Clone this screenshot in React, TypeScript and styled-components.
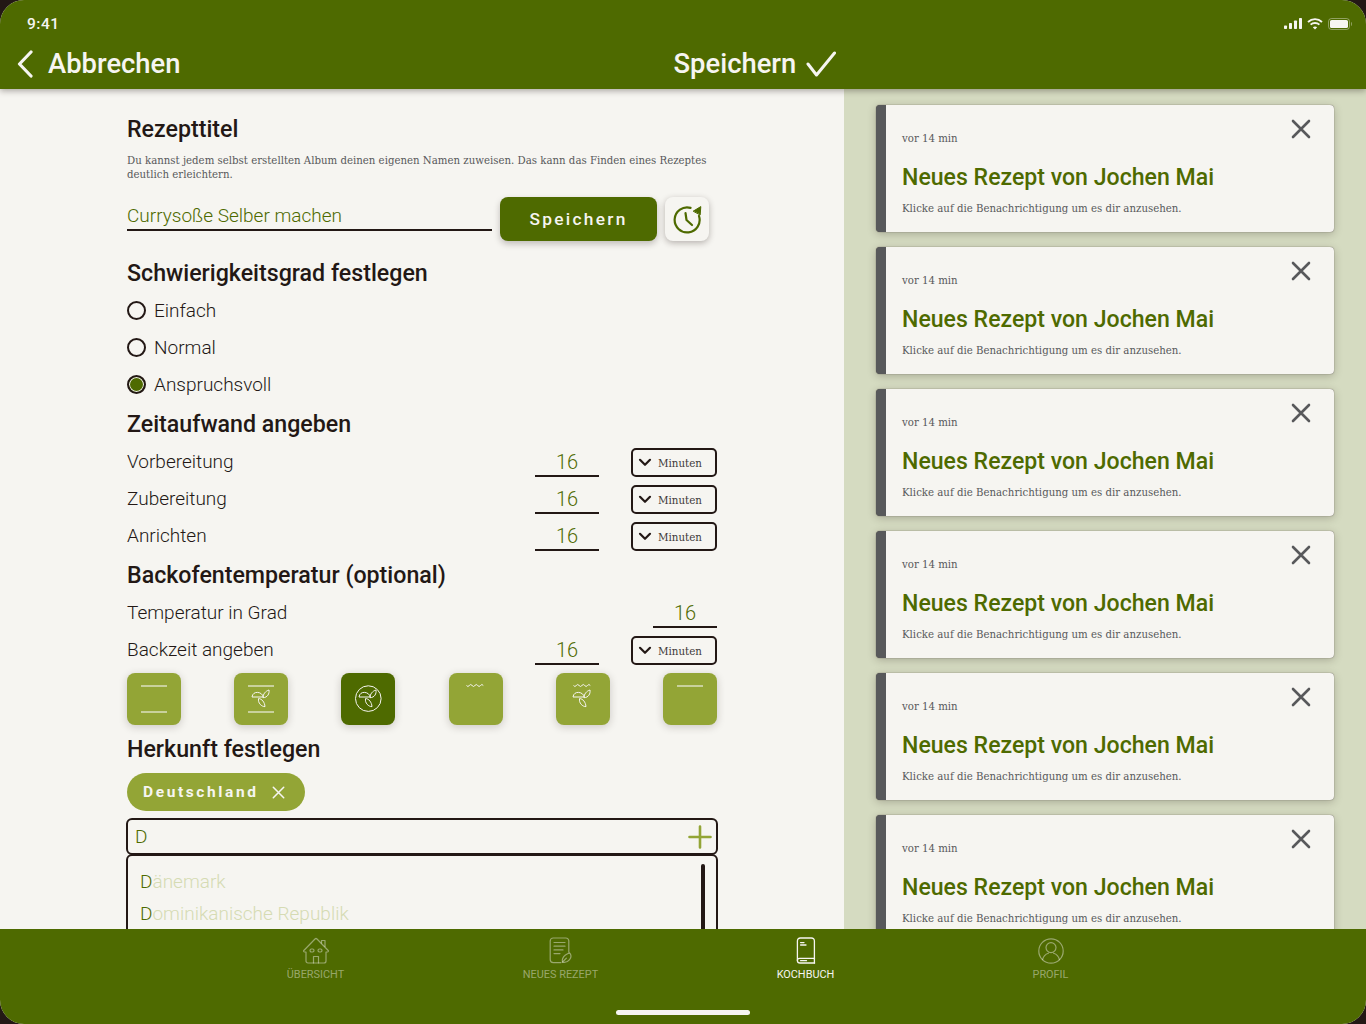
import React from "react";
import styled, { createGlobalStyle } from "styled-components";

const GREEN = "#4e6a00";
const OLIVE = "#93a536";
const PAPER = "#f6f5f1";
const DARK = "#231815";
const SLAB = `"DejaVu Serif", "Liberation Serif", serif`;

const GlobalStyle = createGlobalStyle`
    html, body {
        margin: 0;
        padding: 0;
        background: ${DARK};
    }
    * {
        box-sizing: border-box;
    }
`;

const Icon = {
    Back: () => (
        <svg width="16" height="28" viewBox="0 0 16 28" fill="none" stroke="#f6f5f1" strokeWidth="3.2" strokeLinecap="round" strokeLinejoin="round">
            <path d="M14 2 L2.5 14 L14 26" />
        </svg>
    ),
    Check: () => (
        <svg width="30" height="26" viewBox="0 0 30 26" fill="none" stroke="#f6f5f1" strokeWidth="3" strokeLinecap="round" strokeLinejoin="round">
            <path d="M2 13 L10.5 24 L28.5 2" />
        </svg>
    ),
    Signal: () => (
        <svg width="18" height="11" viewBox="0 0 18 11" fill="#f6f5f1">
            <rect x="0" y="7.5" width="3" height="3.5" rx="0.7" />
            <rect x="5" y="5" width="3" height="6" rx="0.7" />
            <rect x="10" y="2.5" width="3" height="8.5" rx="0.7" />
            <rect x="15" y="0" width="3" height="11" rx="0.7" />
        </svg>
    ),
    Wifi: () => (
        <svg width="16" height="12" viewBox="0 0 16 12" fill="none" stroke="#f6f5f1" strokeWidth="1.9">
            <path d="M1 4 C5 0.2 11 0.2 15 4" />
            <path d="M3.6 6.6 C6 4.4 10 4.4 12.4 6.6" />
            <path d="M8 11.6 L5.8 9.2 C7 8.2 9 8.2 10.2 9.2 Z" fill="#f6f5f1" stroke="none" />
        </svg>
    ),
    Battery: () => (
        <svg width="24" height="12" viewBox="0 0 24 12" fill="none">
            <rect x="0.5" y="0.5" width="21" height="11" rx="3" stroke="#f6f5f1" strokeOpacity="0.4" />
            <rect x="2" y="2" width="18" height="8" rx="1.6" fill="#f6f5f1" />
            <path d="M23 4 C23.8 4.3 24 5.2 24 6 C24 6.8 23.8 7.7 23 8 Z" fill="#f6f5f1" fillOpacity="0.4" />
        </svg>
    ),
    History: () => (
        <svg width="30" height="30" viewBox="0 0 30 30" fill="none" stroke={GREEN} strokeWidth="2.2" strokeLinecap="round" strokeLinejoin="round">
            <path d="M18.5 3.9 A12.5 12.5 0 1 0 27 12" />
            <path d="M13.5 9 L14.5 16 L20 21" />
            <path d="M21.5 7 L28.8 2.6 L28.2 10.6 Z" fill={GREEN} strokeWidth="1" />
        </svg>
    ),
    Close: ({ size = 20, color = "#58595b", width = 2.6 }: { size?: number; color?: string; width?: number }) => (
        <svg width={size} height={size} viewBox="0 0 20 20" fill="none" stroke={color} strokeWidth={width} strokeLinecap="round">
            <path d="M2 2 L18 18 M18 2 L2 18" />
        </svg>
    ),
    Chevron: () => (
        <svg width="14" height="9" viewBox="0 0 14 9" fill="none" stroke={DARK} strokeWidth="2.2" strokeLinecap="round" strokeLinejoin="round">
            <path d="M2 1.8 L7 6.8 L12 1.8" />
        </svg>
    ),
    Plus: () => (
        <svg width="24" height="24" viewBox="0 0 24 24" fill="none" stroke={OLIVE} strokeWidth="2.6" strokeLinecap="round">
            <path d="M12 1.5 V22.5 M1.5 12 H22.5" />
        </svg>
    ),
    Home: () => (
        <svg width="28" height="27" viewBox="0 0 28 27" fill="none" stroke="currentColor" strokeWidth="1.2" strokeLinecap="round" strokeLinejoin="round">
            <path d="M1.8 13.5 L13 2 C13.6 1.4 14.4 1.4 15 2 L26.2 13.5 C26.8 14.2 26.2 15 25.4 15 L24 15 L24 24 C24 25.2 23.2 26 22 26 L6 26 C4.8 26 4 25.2 4 24 L4 15 L2.6 15 C1.8 15 1.2 14.2 1.8 13.5 Z" />
            <path d="M19.5 6 L19.5 3.5 L23 3.5 L23 9.5" />
            <rect x="8" y="12" width="4" height="3" rx="1.4" />
            <rect x="16" y="12" width="4" height="3" rx="1.4" />
            <path d="M11.5 26 L11.5 19.5 L16.5 19.5 L16.5 26" />
        </svg>
    ),
    Recipe: () => (
        <svg width="24" height="27" viewBox="0 0 24 27" fill="none" stroke="currentColor" strokeWidth="1.2" strokeLinecap="round" strokeLinejoin="round">
            <path d="M19.8 15 L19.8 4 C19.8 2.2 18.6 1 16.8 1 L4.2 1 C2.4 1 1.2 2.2 1.2 4 L1.2 22.6 C1.2 24.4 2.4 25.6 4.2 25.6 L12 25.6" />
            <path d="M5 5.5 H16 M5 9.2 H16 M5 12.9 H14 M5 16.6 H11" />
            <path d="M13.5 25.2 C12.8 22.6 14 20 16.4 18 L20.4 15.8 C22.4 17.6 22.6 20.4 20.6 22.6 C18.8 24.8 16 25.8 13.5 25.2 Z" />
            <path d="M13.6 25 L17.4 21.2" />
        </svg>
    ),
    Book: () => (
        <svg width="20" height="27" viewBox="0 0 20 27" fill="none" stroke="currentColor" strokeWidth="1.3" strokeLinecap="round" strokeLinejoin="round">
            <path d="M18.4 22 L18.4 4 C18.4 2.2 17.2 1 15.4 1 L4.4 1 C2.6 1 1.4 2.2 1.4 4 L1.4 23.4 C1.4 25 2.4 26 4 26 L18.6 26" />
            <path d="M1.4 23.4 C1.4 22.4 2.4 21.4 3.6 21.4 L18.4 21.4" />
            <path d="M18.4 21.4 L18.4 26" />
            <path d="M4.6 5.6 H8 M4.6 8 H10 M4.6 23.7 H10.5" />
        </svg>
    ),
    Profile: () => (
        <svg width="26" height="26" viewBox="0 0 26 26" fill="none" stroke="currentColor" strokeWidth="1.2" strokeLinecap="round" strokeLinejoin="round">
            <circle cx="13" cy="13" r="12.2" />
            <circle cx="13" cy="9.6" r="5" />
            <path d="M4.6 21.6 C5.4 18 8.4 15.8 10.4 15.2 M21.4 21.6 C20.6 18 17.6 15.8 15.6 15.2" />
        </svg>
    ),
};

type OvenMode = "top-bottom" | "fan-top-bottom" | "fan-ring" | "grill" | "grill-fan" | "top";

const Fan = ({ x = 0 }: { x?: number }) => (
    <g transform={`translate(${x} 0)`} fill="none" stroke="#f6f5f1" strokeWidth="1" strokeLinejoin="round">
        <path d="M18 24 C18.4 20.6 21 19.2 23.6 19.4 C26.4 19.6 28.8 21.4 29.3 24 Z" />
        <path d="M29 24.7 C29 21 31.6 18 35 17 C35.6 20.6 33.6 24.6 29 24.7 Z" />
        <path d="M24.6 25.5 C27.8 25.8 30.6 29 31 33.6 C27.6 33.8 23.6 30 24.6 25.5 Z" />
    </g>
);

const Wave = () => (
    <path d="M17.5 12.5 q1.4 2 2.8 0 t2.8 0 t2.8 0 t2.8 0 t2.8 0 t2.8 0" fill="none" stroke="#f6f5f1" strokeWidth="1" />
);

const OvenIcon = ({ mode }: { mode: OvenMode }) => {
    const faint = "rgba(246,245,241,0.55)";
    return (
        <svg width="54" height="52" viewBox="0 0 54 52">
            {(mode === "top-bottom" || mode === "fan-top-bottom" || mode === "top") && (
                <rect x="14" y="12" width="26" height="2" fill={faint} />
            )}
            {(mode === "top-bottom" || mode === "fan-top-bottom") && (
                <rect x="14" y="38" width="26" height="2" fill={faint} />
            )}
            {(mode === "grill" || mode === "grill-fan") && <Wave />}
            {mode === "fan-top-bottom" && <Fan />}
            {mode === "fan-ring" && (
                <>
                    <circle cx="27.3" cy="25.6" r="12.8" fill="none" stroke="#f6f5f1" strokeWidth="1" />
                    <Fan />
                </>
            )}
            {mode === "grill-fan" && <Fan x={-1} />}
        </svg>
    );
};

const ovenModes: OvenMode[] = ["top-bottom", "fan-top-bottom", "fan-ring", "grill", "grill-fan", "top"];

const AmountRow = ({ label, value = "16" }: { label: string; value?: string }) => (
    <Row>
        <RowLabel>{label}</RowLabel>
        <AmountField>{value}</AmountField>
        <UnitSelect>
            <Icon.Chevron />
            <UnitText>Minuten</UnitText>
        </UnitSelect>
    </Row>
);

const Notification = () => (
    <Card>
        <CardTime>vor 14 min</CardTime>
        <CardTitle>Neues Rezept von Jochen Mai</CardTitle>
        <CardText>Klicke auf die Benachrichtigung um es dir anzusehen.</CardText>
        <CardClose>
            <Icon.Close />
        </CardClose>
    </Card>
);

const App: React.FC = () => {
    return (
        <Screen>
            <GlobalStyle />
            <Header>
                <StatusBar>
                    <Clock>9:41</Clock>
                    <StatusIcons>
                        <Icon.Signal />
                        <Icon.Wifi />
                        <Icon.Battery />
                    </StatusIcons>
                </StatusBar>
                <NavBar>
                    <BackLink>
                        <Icon.Back />
                        <NavText>Abbrechen</NavText>
                    </BackLink>
                    <SaveLink>
                        <NavText>Speichern</NavText>
                        <Icon.Check />
                    </SaveLink>
                </NavBar>
            </Header>

            <Main>
                <FormPane>
                    <FirstHeading>Rezepttitel</FirstHeading>
                    <Description>
                        Du kannst jedem selbst erstellten Album deinen eigenen Namen zuweisen. Das kann das Finden eines Rezeptes
                        deutlich erleichtern.
                    </Description>
                    <TitleRow>
                        <TitleInput>Currysoße Selber machen</TitleInput>
                        <SaveButton>Speichern</SaveButton>
                        <HistoryButton>
                            <Icon.History />
                        </HistoryButton>
                    </TitleRow>

                    <Heading>Schwierigkeitsgrad festlegen</Heading>
                    <Row>
                        <Radio />
                        <RadioLabel>Einfach</RadioLabel>
                    </Row>
                    <Row>
                        <Radio />
                        <RadioLabel>Normal</RadioLabel>
                    </Row>
                    <Row>
                        <Radio $checked />
                        <RadioLabel>Anspruchsvoll</RadioLabel>
                    </Row>

                    <Heading>Zeitaufwand angeben</Heading>
                    <AmountRow label="Vorbereitung" />
                    <AmountRow label="Zubereitung" />
                    <AmountRow label="Anrichten" />

                    <Heading>Backofentemperatur (optional)</Heading>
                    <Row>
                        <RowLabel>Temperatur in Grad</RowLabel>
                        <TemperatureField>16</TemperatureField>
                    </Row>
                    <AmountRow label="Backzeit angeben" />

                    <OvenRow>
                        {ovenModes.map((mode) => (
                            <OvenButton key={mode} $active={mode === "fan-ring"}>
                                <OvenIcon mode={mode} />
                            </OvenButton>
                        ))}
                    </OvenRow>

                    <OriginHeading>Herkunft festlegen</OriginHeading>
                    <Chip>
                        Deutschland
                        <Icon.Close size={13} color={PAPER} width={2.4} />
                    </Chip>
                    <SearchBox>
                        <SearchValue>D</SearchValue>
                        <Icon.Plus />
                    </SearchBox>
                    <Suggestions>
                        <Suggestion>
                            <Match>D</Match>änemark
                        </Suggestion>
                        <Suggestion>
                            <Match>D</Match>ominikanische Republik
                        </Suggestion>
                        <ScrollThumb />
                    </Suggestions>
                </FormPane>

                <NotificationPane>
                    {[0, 1, 2, 3, 4, 5].map((i) => (
                        <Notification key={i} />
                    ))}
                </NotificationPane>
            </Main>

            <TabBar>
                <Tab>
                    <TabIcon><Icon.Home /></TabIcon>
                    <TabLabel>ÜBERSICHT</TabLabel>
                </Tab>
                <Tab>
                    <TabIcon><Icon.Recipe /></TabIcon>
                    <TabLabel>NEUES REZEPT</TabLabel>
                </Tab>
                <Tab $active>
                    <TabIcon><Icon.Book /></TabIcon>
                    <TabLabel>KOCHBUCH</TabLabel>
                </Tab>
                <Tab>
                    <TabIcon><Icon.Profile /></TabIcon>
                    <TabLabel>PROFIL</TabLabel>
                </Tab>
                <HomeIndicator />
            </TabBar>
        </Screen>
    );
};

export default App;

const Screen = styled.div`
    position: relative;
    display: flex;
    flex-direction: column;
    width: 1366px;
    height: 1024px;
    overflow: hidden;
    border-radius: 24px;
    background: ${PAPER};
    font-family: Roboto, sans-serif;
    color: ${DARK};
`;

const Header = styled.header`
    position: relative;
    z-index: 2;
    flex: none;
    height: 89px;
    padding: 0 17px;
    background: ${GREEN};
    color: ${PAPER};
    box-shadow: 0 2px 6px rgba(35, 24, 21, 0.35);
`;

const StatusBar = styled.div`
    display: flex;
    justify-content: space-between;
    align-items: center;
    height: 47px;
`;

const Clock = styled.span`
    padding-left: 10px;
    font-size: 15.5px;
    font-weight: 500;
    letter-spacing: 0.5px;
`;

const StatusIcons = styled.div`
    display: flex;
    align-items: center;
    gap: 5px;
    margin-right: -3px;
`;

const NavBar = styled.div`
    display: flex;
    align-items: center;
    height: 33px;
    padding-top: 1px;
`;

const BackLink = styled.div`
    display: flex;
    align-items: center;
    gap: 15px;
`;

const SaveLink = styled.div`
    display: flex;
    align-items: center;
    gap: 10px;
    margin-left: 493px;
`;

const NavText = styled.span`
    font-size: 27.4px;
    font-weight: 500;
    line-height: 32px;
`;

const Main = styled.main`
    flex: 1;
    display: flex;
    min-height: 0;
    overflow: hidden;
`;

const FormPane = styled.section`
    flex: none;
    width: 844px;
    padding: 26px 127px 0;
`;

const Heading = styled.h2`
    height: 28px;
    margin: 6px 0;
    font-size: 23.2px;
    font-weight: 500;
    line-height: 30px;
    color: ${DARK};
`;

const FirstHeading = styled(Heading)`
    margin: 0 0 11px;
    line-height: 28px;
`;

const OriginHeading = styled(Heading)`
    margin: 9px 0 11px;
`;

const Description = styled.p`
    margin: 0;
    height: 28px;
    font-family: ${SLAB};
    font-size: 10.2px;
    line-height: 14px;
    color: #58595b;
    width: 590px;
`;

const TitleRow = styled.div`
    display: flex;
    align-items: center;
    height: 44px;
    margin: 15px 0 17px;
`;

const TitleInput = styled.div`
    width: 365px;
    height: 33px;
    margin-right: 8px;
    margin-top: -10px;
    border-bottom: 2px solid ${DARK};
    font-size: 19px;
    font-weight: 300;
    line-height: 36px;
    color: ${GREEN};
`;

const SaveButton = styled.button`
    width: 157px;
    height: 44px;
    border: none;
    border-radius: 8px;
    background: ${GREEN};
    color: ${PAPER};
    font-family: Roboto, sans-serif;
    font-size: 17.3px;
    font-weight: 500;
    letter-spacing: 2.3px;
    box-shadow: 0 3px 6px rgba(35, 24, 21, 0.25);
`;

const HistoryButton = styled.button`
    display: flex;
    align-items: center;
    justify-content: center;
    width: 44px;
    height: 44px;
    margin-left: 8px;
    padding: 0;
    border: none;
    border-radius: 8px;
    background: ${PAPER};
    box-shadow: 0 2px 6px rgba(35, 24, 21, 0.3);
`;

const Row = styled.div`
    display: flex;
    align-items: center;
    height: 37px;
`;

const Radio = styled.span<{ $checked?: boolean }>`
    flex: none;
    width: 19px;
    height: 19px;
    margin-right: 8px;
    border: 2.3px solid ${DARK};
    border-radius: 50%;
    background: ${(p) => (p.$checked ? GREEN : "transparent")};
    box-shadow: ${(p) => (p.$checked ? `inset 0 0 0 1px ${PAPER}` : "none")};
`;

const RadioLabel = styled.span`
    font-size: 19px;
    font-weight: 300;
    color: ${DARK};
`;

const RowLabel = styled(RadioLabel)`
    flex: 1;
`;

const AmountField = styled.div`
    width: 64px;
    height: 29px;
    margin: 2px 32px 0 0;
    border-bottom: 2px solid ${DARK};
    font-size: 20px;
    font-weight: 300;
    line-height: 29px;
    text-align: center;
    color: ${GREEN};
`;

const TemperatureField = styled(AmountField)`
    margin-right: 0;
`;

const UnitSelect = styled.div`
    display: flex;
    align-items: center;
    gap: 6px;
    width: 86px;
    height: 29px;
    margin-top: 2px;
    padding-left: 5px;
    border: 2px solid ${DARK};
    border-radius: 5px;
`;

const UnitText = styled.span`
    font-family: ${SLAB};
    font-size: 10.3px;
    color: #3e3a39;
`;

const OvenRow = styled.div`
    display: flex;
    justify-content: space-between;
    margin-top: 5px;
`;

const OvenButton = styled.div<{ $active?: boolean }>`
    width: 54px;
    height: 52px;
    border-radius: 8px;
    background: ${(p) => (p.$active ? GREEN : OLIVE)};
    box-shadow: 0 2px 8px rgba(35, 24, 21, 0.2);
`;

const Chip = styled.div`
    display: inline-flex;
    align-items: center;
    gap: 13px;
    height: 38px;
    padding: 0 20px 0 16px;
    border-radius: 19px;
    background: ${OLIVE};
    color: ${PAPER};
    font-size: 15.5px;
    font-weight: 700;
    letter-spacing: 2.6px;
    vertical-align: top;
`;

const SearchBox = styled.div`
    display: flex;
    align-items: center;
    justify-content: space-between;
    width: 592px;
    height: 37px;
    margin: 7px 0 0 -1px;
    padding: 0 4px 0 7px;
    border: 2px solid ${DARK};
    border-radius: 6px;
`;

const SearchValue = styled.span`
    font-size: 19px;
    font-weight: 300;
    color: ${GREEN};
`;

const Suggestions = styled.div`
    position: relative;
    width: 592px;
    height: 100px;
    margin: -1px 0 0 -1px;
    padding: 10px 12px 0;
    border: 2px solid ${DARK};
    border-radius: 6px;
`;

const Suggestion = styled.div`
    height: 32px;
    font-size: 19px;
    font-weight: 300;
    line-height: 32px;
    color: #d5dbb3;
`;

const Match = styled.span`
    color: ${GREEN};
`;

const ScrollThumb = styled.div`
    position: absolute;
    top: 8px;
    right: 11px;
    width: 4px;
    height: 80px;
    border-radius: 2px;
    background: ${DARK};
`;

const NotificationPane = styled.aside`
    flex: 1;
    display: flex;
    flex-direction: column;
    gap: 15px;
    padding: 16px 32px 0;
    background: #d5dbc1;
`;

const Card = styled.article`
    position: relative;
    flex: none;
    height: 127px;
    padding: 0 16px;
    border-left: 10px solid #58595b;
    border-radius: 4px;
    background: ${PAPER};
    box-shadow: 0 0 1px rgba(35, 24, 21, 0.8), 0 2px 8px rgba(35, 24, 21, 0.25);
`;

const CardTime = styled.div`
    padding-top: 27px;
    font-family: ${SLAB};
    font-size: 10.2px;
    line-height: 14px;
    color: #58595b;
`;

const CardTitle = styled.h3`
    margin: 18px 0 0;
    font-size: 23.1px;
    font-weight: 500;
    line-height: 28px;
    color: ${GREEN};
`;

const CardText = styled.div`
    margin-top: 10px;
    font-family: ${SLAB};
    font-size: 10.2px;
    line-height: 14px;
    color: #58595b;
`;

const CardClose = styled.div`
    position: absolute;
    top: 14px;
    right: 23px;
    line-height: 0;
`;

const TabBar = styled.nav`
    position: relative;
    z-index: 2;
    flex: none;
    display: flex;
    justify-content: center;
    height: 95px;
    background: ${GREEN};
`;

const Tab = styled.div<{ $active?: boolean }>`
    display: flex;
    flex-direction: column;
    align-items: center;
    width: 245px;
    padding-top: 8px;
    color: ${(p) => (p.$active ? PAPER : "rgba(246, 245, 241, 0.45)")};
`;

const TabIcon = styled.div`
    display: flex;
    align-items: center;
    height: 27px;
`;

const TabLabel = styled.span`
    margin-top: 4px;
    font-size: 10.9px;
    line-height: 13px;
`;

const HomeIndicator = styled.div`
    position: absolute;
    left: 616px;
    bottom: 9px;
    width: 134px;
    height: 5px;
    border-radius: 3px;
    background: ${PAPER};
`;
